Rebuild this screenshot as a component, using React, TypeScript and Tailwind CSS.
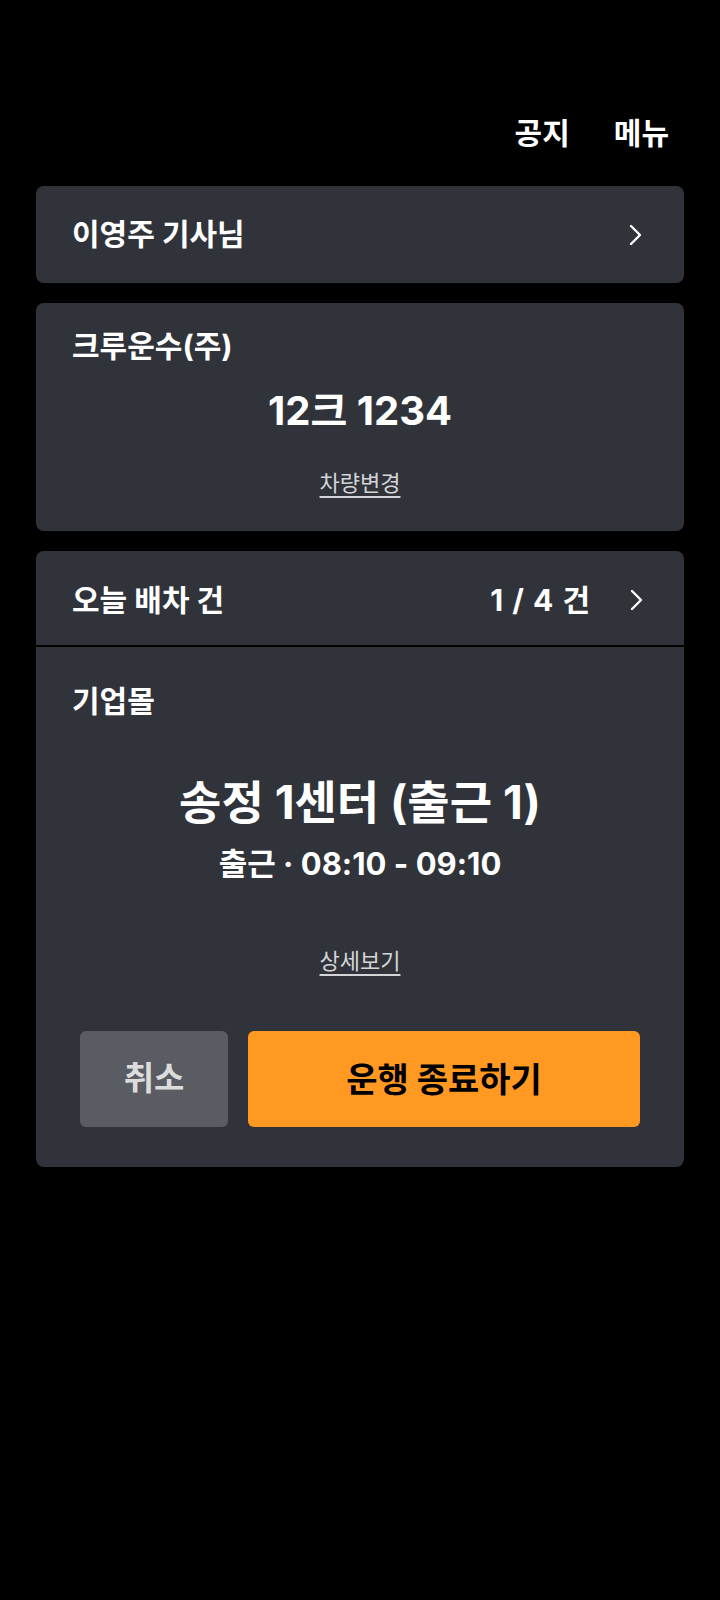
const font = { fontFamily: 'Inter, "Noto Sans CJK KR", sans-serif' };

function Chevron() {
  return (
    <svg width="14" height="22" viewBox="0 0 14 22" fill="none" className="shrink-0">
      <polyline
        points="2,2 11,11 2,20"
        stroke="#ffffff"
        strokeWidth="2.4"
        strokeLinecap="round"
        strokeLinejoin="round"
      />
    </svg>
  );
}

export default function App() {
  return (
    <div className="min-h-[1600px] w-[720px] bg-black text-white" style={font}>
      {/* top links */}
      <div className="flex justify-end gap-[44px] pt-[113px] pr-[51px] mb-[33px]">
        <span className="text-[30px] font-bold leading-[40px]">공지</span>
        <span className="text-[30px] font-bold leading-[40px]">메뉴</span>
      </div>

      <main className="flex flex-col gap-[20px] px-[36px]">
        {/* driver */}
        <div className="flex h-[97px] items-center justify-between rounded-[8px] bg-[#30333a] pl-[36px] pr-[41px]">
          <span className="text-[30px] font-bold">이영주 기사님</span>
          <Chevron />
        </div>

        {/* vehicle */}
        <div className="flex h-[228px] flex-col rounded-[8px] bg-[#30333a] px-[36px] pt-[24px]">
          <span className="text-[30px] font-bold leading-[38px]">크루운수(주)</span>
          <span className="mt-[21px] text-center text-[40px] font-bold leading-[50px]">12크 1234</span>
          <span className="mt-[31px] text-center text-[22px] leading-[32px] text-[#d4d5d8] underline underline-offset-[5px]">
            차량변경
          </span>
        </div>

        {/* dispatch */}
        <div className="flex flex-col overflow-hidden rounded-[8px] bg-[#30333a]">
          <div className="flex h-[94px] items-center pl-[36px] pr-[40px] pt-[4px]">
            <span className="flex-1 text-[30px] font-bold">오늘 배차 건</span>
            <span className="mr-[40px] text-[30px] font-bold [word-spacing:2px]">1 / 4 건</span>
            <Chevron />
          </div>
          <div className="h-[2px] bg-black" />
          <div className="flex flex-col px-[36px] pt-[34px] pb-[40px]">
            <span className="text-[30px] font-bold leading-[40px]">기업몰</span>
            <span className="mt-[56px] text-center text-[46px] font-bold leading-[50px]">송정 1센터 (출근 1)</span>
            <span className="mt-[18px] text-center text-[31px] font-bold leading-[38px]">출근 · 08:10 - 09:10</span>
            <span className="mt-[62px] text-center text-[22px] leading-[32px] text-[#d4d5d8] underline underline-offset-[5px]">
              상세보기
            </span>
            <div className="mt-[54px] flex gap-[20px] px-[8px]">
              <button className="h-[96px] w-[148px] rounded-[6px] bg-[#595c63] text-[33px] font-bold text-[#dcdcdc]">
                취소
              </button>
              <button className="h-[96px] flex-1 rounded-[6px] bg-[#ff9922] text-[34px] font-bold text-black">
                운행 종료하기
              </button>
            </div>
          </div>
        </div>
      </main>
    </div>
  );
}
